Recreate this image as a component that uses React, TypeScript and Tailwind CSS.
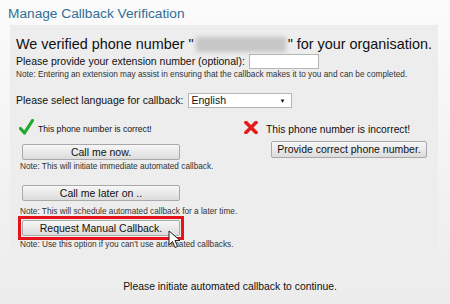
import React from "react";

function Check() {
  return (
    <svg width="15" height="16" viewBox="0 0 15 16" className="shrink-0">
      <path d="M1.5 9.5 L5.5 14 L13.5 1.5" fill="none" stroke="#1faa2e" strokeWidth="3.2" strokeLinecap="round" strokeLinejoin="round" />
    </svg>
  );
}

function Cross() {
  return (
    <svg width="14" height="13" viewBox="0 0 14 13" className="shrink-0">
      <path d="M2 1.5 L12 11.5 M12 1.5 L2 11.5" fill="none" stroke="#e31b1b" strokeWidth="3.5" strokeLinecap="square" />
    </svg>
  );
}

function Btn({ children, className = "" }: { children: React.ReactNode; className?: string }) {
  return (
    <button className={"block h-[16px] border border-[#a9a9a9] rounded-[2px] bg-gradient-to-b from-[#f7f7f7] to-[#dcdcdc] text-[10.5px] leading-none text-[#111] " + className}>
      {children}
    </button>
  );
}

function Cursor() {
  return (
    <svg width="14" height="20" viewBox="0 0 14 20" className="absolute left-[149px] top-[14px]">
      <path d="M1 1 L1 15 L4.5 11.5 L7 17.5 L9.5 16.5 L7 10.5 L12 10.5 Z" fill="#fff" stroke="#222" strokeWidth="1" strokeLinejoin="round" />
    </svg>
  );
}

export default function App() {
  return (
    <div className="w-[450px] h-[304px] bg-gradient-to-b from-[#fbfbfb] to-[#ececec] font-['Liberation_Sans',Arial,sans-serif] text-[#111] overflow-hidden">
      <h1 className="pl-[8px] pt-[6px] text-[13.7px] leading-[16px] text-[#2f6f96]">Manage Callback Verification</h1>
      <div className="ml-[10px] mt-[3px] w-[428px] h-[241px] bg-[#ededed] pl-[6px] pt-[10px]">
        <div className="text-[14.4px] leading-[18px] flex items-center whitespace-nowrap">
          <span>We verified phone number "</span>
          <span className="inline-block w-[90px] h-[15px] bg-[#c6c6c6] blur-[2px] mx-[2px]" />
          <span>" for your organisation.</span>
        </div>
        <div className="flex items-center h-[16px] text-[10.5px] leading-[16px]">
          <span>Please provide your extension number (optional):</span>
          <input className="ml-[4px] w-[70px] h-[15px] bg-white border border-[#b5b5b5]" />
        </div>
        <p className="text-[8.25px] leading-[10px] text-[#333] mt-[1px] whitespace-nowrap">
          Note: Entering an extension may assist in ensuring that the callback makes it to you and can be completed.
        </p>
        <div className="flex items-center h-[15px] text-[10.5px] leading-[15px] mt-[13px]">
          <span>Please select language for callback:</span>
          <div className="ml-[4px] w-[104px] h-[15px] bg-white border border-[#b5b5b5] flex items-center justify-between pl-[3px] pr-[5px]">
            <span className="text-[10.5px] leading-none">English</span>
            <span className="text-[6px] leading-none">▼</span>
          </div>
        </div>
        <div className="flex mt-[11px]">
          <div className="w-[228px] pl-[3px]">
            <div className="flex items-end h-[16px] gap-[4px] text-[8.6px] leading-[10px]">
              <Check />
              <span className="mb-[1px]">This phone number is correct!</span>
            </div>
            <Btn className="ml-[3px] mt-[9px] w-[158px]">Call me now.</Btn>
            <p className="ml-[1px] text-[8.25px] leading-[9px] text-[#333] mt-[2px]">Note: This will initiate immediate automated callback.</p>
            <Btn className="ml-[3px] mt-[14px] w-[158px]">Call me later on ..</Btn>
            <p className="ml-[1px] text-[8.25px] leading-[9px] text-[#333] mt-[6px] whitespace-nowrap">Note: This will schedule automated callback for a later time.</p>
            <div className="relative">
              <div className="w-[166px] h-[24px] border-[3px] border-[#e8121b] flex items-center pl-[1px] -ml-[1px]">
                <Btn className="w-[158px]">Request Manual Callback.</Btn>
              </div>
              <Cursor />
              <p className="ml-[1px] text-[8.25px] leading-[9px] text-[#333] whitespace-nowrap">Note: Use this option if you can't use automated callbacks.</p>
            </div>
          </div>
          <div className="pt-[2px]">
            <div className="flex items-center h-[13px] gap-[8px] text-[10.3px] leading-[13px]">
              <Cross />
              <span className="mt-[3px]">This phone number is incorrect!</span>
            </div>
            <Btn className="ml-[27px] mt-[7px] w-[156px] h-[17px]">Provide correct phone number.</Btn>
          </div>
        </div>
      </div>
      <p className="text-center text-[10.4px] leading-[14px] mt-[14px] pl-[10px]">Please initiate automated callback to continue.</p>
    </div>
  );
}
